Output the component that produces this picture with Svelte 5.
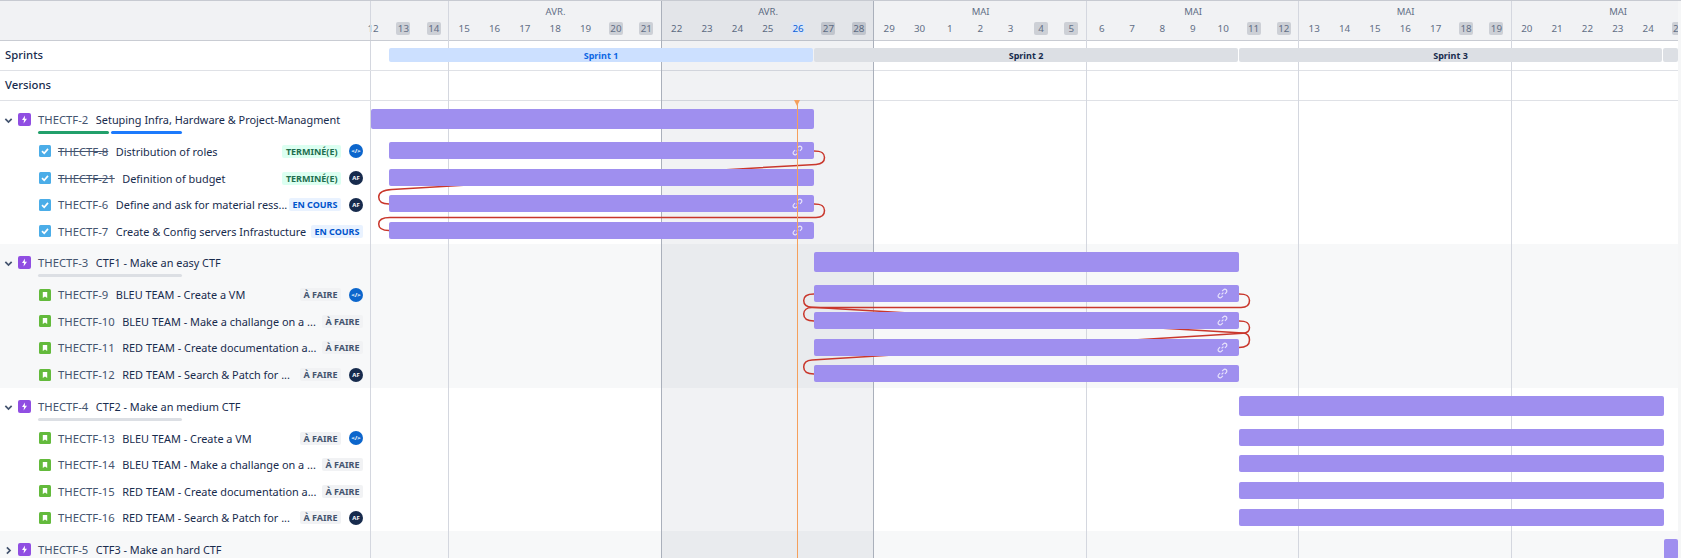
<script lang="ts">
  // timeline scale: one day column, first visible day is 12 avr. and starts left of the chart
  const dayW = 30.36;
  const originX = -13.1;
  const chartLeft = 371;

  const x = (px: number) => px - chartLeft;

  const april = [12, 13, 14, 15, 16, 17, 18, 19, 20, 21, 22, 23, 24, 25, 26, 27, 28, 29, 30];
  const may = Array.from({ length: 25 }, (_, i) => i + 1);
  const weekendSet = new Set(["a13", "a14", "a20", "a21", "a27", "a28", "m4", "m5", "m11", "m12", "m18", "m19", "m25"]);
  const days = [
    ...april.map((d) => ({ id: "a" + d, label: d })),
    ...may.map((d) => ({ id: "m" + d, label: d })),
  ];

  const weekW = dayW * 7;
  const firstLine = 448.3;
  const weekLines = [0, 1, 2, 3, 4, 5];
  const months = ["AVR.", "AVR.", "MAI", "MAI", "MAI", "MAI"];

  const sprints = [
    { label: "Sprint 1", from: 389, to: 813, active: true },
    { label: "Sprint 2", from: 814, to: 1238, active: false },
    { label: "Sprint 3", from: 1239, to: 1662, active: false },
    { label: "", from: 1663, to: 1678, active: false },
  ];

  type Child = { key: string; title: string; kind: string; status: string; who?: string; done?: boolean };
  type Group = { key: string; title: string; open: boolean; from: number; to: number; progress: boolean; childFrom: number; alt: boolean; children: Child[] };

  const groups: Group[] = [
    {
      key: "THECTF-2", title: "Setuping Infra, Hardware & Project-Managment", open: true,
      from: 371, to: 814, childFrom: 389, progress: true, alt: false,
      children: [
        { key: "THECTF-8", title: "Distribution of roles", kind: "task", status: "TERMINÉ(E)", who: "dev", done: true },
        { key: "THECTF-21", title: "Definition of budget", kind: "task", status: "TERMINÉ(E)", who: "af", done: true },
        { key: "THECTF-6", title: "Define and ask for material ress...", kind: "task", status: "EN COURS", who: "af" },
        { key: "THECTF-7", title: "Create & Config servers Infrastucture", kind: "task", status: "EN COURS" },
      ],
    },
    {
      key: "THECTF-3", title: "CTF1 - Make an easy CTF", open: true,
      from: 814, to: 1239, childFrom: 814, progress: false, alt: true,
      children: [
        { key: "THECTF-9", title: "BLEU TEAM - Create a VM", kind: "story", status: "À FAIRE", who: "dev" },
        { key: "THECTF-10", title: "BLEU TEAM - Make a challange on a ...", kind: "story", status: "À FAIRE" },
        { key: "THECTF-11", title: "RED TEAM - Create documentation a...", kind: "story", status: "À FAIRE" },
        { key: "THECTF-12", title: "RED TEAM - Search & Patch for ...", kind: "story", status: "À FAIRE", who: "af" },
      ],
    },
    {
      key: "THECTF-4", title: "CTF2 - Make an medium CTF", open: true,
      from: 1239, to: 1664, childFrom: 1239, progress: false, alt: false,
      children: [
        { key: "THECTF-13", title: "BLEU TEAM - Create a VM", kind: "story", status: "À FAIRE", who: "dev" },
        { key: "THECTF-14", title: "BLEU TEAM - Make a challange on a ...", kind: "story", status: "À FAIRE" },
        { key: "THECTF-15", title: "RED TEAM - Create documentation a...", kind: "story", status: "À FAIRE" },
        { key: "THECTF-16", title: "RED TEAM - Search & Patch for ...", kind: "story", status: "À FAIRE", who: "af" },
      ],
    },
    {
      key: "THECTF-5", title: "CTF3 - Make an hard CTF", open: false,
      from: 1664, to: 1678, childFrom: 1664, progress: false, alt: true,
      children: [],
    },
  ];

  // red dependency links, in page coordinates
  const links = [
    "M814 151 C822 151 824.5 153 824.5 157.5 C824.5 162 822 164 816 164.4 L392 189.6 C383 190.2 378.7 193 378.7 197 C378.7 201 382 204 389 204",
    "M814 204 C822 204 824.5 206 824.5 210.5 C824.5 215 822 217.5 816 217.5 L390 217.5 C383 217.5 378.7 220 378.7 224 C378.7 228 382 230.5 389 230.5",
    "M1239 294 C1247 294 1249.5 296 1249.5 300.5 C1249.5 305 1247 307.5 1241 307.5 L812 307.5 C807 307.5 803.7 310 803.7 314 C803.7 318 807 321 814 321",
    "M814 294 C807 294 803.7 296 803.7 300.5 C803.7 304.5 806 307 812 307.3 L1243 333 C1247 333.3 1249.5 336 1249.5 340 C1249.5 344.5 1247 347.5 1239 347.5",
    "M1239 321 C1247 321 1249.5 323 1249.5 327.5 C1249.5 331 1247 333 1243 333.3 L812 360 C807 360.4 803.7 363 803.7 367 C803.7 371 807 374 814 374",
  ];
</script>

<div class="page">
  <div class="row head">
    <div class="side"></div>
    <div class="chart">
      {#each months as m, i}
        <span class="month" style="left:{x(firstLine) + 1 + weekW * (i + 0.5)}px">{m}</span>
      {/each}
      {#each days as d, i}
        <span
          class="day"
          class:weekend={weekendSet.has(d.id)}
          class:today={d.id === "a26"}
          style="left:{originX + dayW * i}px"
        ><i>{d.label}</i></span>
      {/each}
    </div>
  </div>

  <div class="row lane">
    <div class="side lane-name">Sprints</div>
    <div class="chart">
      {#each sprints as s}
        <span class="sprint" class:active={s.active} style="left:{x(s.from)}px;width:{s.to - s.from}px">{s.label}</span>
      {/each}
    </div>
  </div>

  <div class="row lane">
    <div class="side lane-name">Versions</div>
    <div class="chart"></div>
  </div>

  {#each groups as g}
    <div class="group" class:alt={g.alt}>
      <div class="row epic">
        <div class="side">
          <svg class="chev" viewBox="0 0 10 10" class:closed={!g.open}>
            <path d="M1.5 3.2 L5 6.7 L8.5 3.2" fill="none" stroke="#44546f" stroke-width="1.9" />
          </svg>
          <svg class="type" viewBox="0 0 13 13">
            <rect width="13" height="13" rx="2" fill="#904ee2" />
            <path d="M7 2.6 L4 7.1 H6 L5.6 10.4 L9 5.7 H6.8 Z" fill="#fff" />
          </svg>
          <div class="epic-text">
            <div class="title"><span class="key">{g.key}</span><span class="sum">{g.title}</span></div>
            {#if g.open}
              <div class="progress">
                {#if g.progress}
                  <span class="green"></span><span class="blue"></span>
                {:else}
                  <span class="grey"></span>
                {/if}
              </div>
            {/if}
          </div>
        </div>
        <div class="chart">
          <div class="bar epic-bar" style="left:{x(g.from)}px;width:{g.to - g.from}px"></div>
        </div>
      </div>

      {#each g.children as c, n}
        <div class="row child">
          <div class="side">
            {#if c.kind === "task"}
              <svg class="type small" viewBox="0 0 12 12">
                <rect width="12" height="12" rx="1.5" fill="#4bade8" />
                <path d="M3 6.2 L5.2 8.3 L9 3.9" fill="none" stroke="#fff" stroke-width="1.7" />
              </svg>
            {:else}
              <svg class="type small" viewBox="0 0 12 12">
                <rect width="12" height="12" rx="1.5" fill="#63ba3c" />
                <path d="M3.8 3 H8.2 V9 L6 7.4 L3.8 9 Z" fill="#fff" />
              </svg>
            {/if}
            <span class="key" class:done={c.done}>{c.key}</span>
            <span class="sum">{c.title}</span>
            <span
              class="status"
              class:green-tag={c.status.startsWith("TERM")}
              class:blue-tag={c.status === "EN COURS"}
            >{c.status}</span>
            {#if c.who === "dev"}
              <span class="avatar dev">&lt;/&gt;</span>
            {:else if c.who === "af"}
              <span class="avatar af">AF</span>
            {/if}
          </div>
          <div class="chart">
            <div class="bar" style="left:{x(g.childFrom)}px;width:{g.to - g.childFrom}px">
              {#if g.childFrom !== 1239 && !(g.childFrom === 389 && n === 1)}
                <svg class="link" viewBox="0 0 12 12">
                  <path d="M5 7 L7 5 M5.6 3.4 L7 2 C8 1 9.2 1 10.1 1.9 C11 2.8 11 4 10 5 L8.6 6.4 M6.4 8.6 L5 10 C4 11 2.8 11 1.9 10.1 C1 9.2 1 8 2 7 L3.4 5.6" fill="none" stroke="#e9e5fb" stroke-width="1.2" />
                </svg>
              {/if}
            </div>
          </div>
        </div>
      {/each}
    </div>
  {/each}

  <!-- overlays on the chart area -->
  <div class="shade"></div>
  {#each weekLines as w}
    <span class="vline" class:strong={w === 1 || w === 2} style="left:{firstLine + weekW * w}px"></span>
  {/each}
  <svg class="deps" width="1681" height="558">
    {#each links as d}
      <path {d} fill="none" stroke="#c9372c" stroke-width="1.5" />
    {/each}
  </svg>
  <div class="now"></div>
  <div class="now-tip"></div>
  <div class="edge"></div>
</div>

<style>
  :global(body) {
    margin: 0;
    background: #fff;
  }

  .page {
    position: relative;
    width: 1681px;
    height: 558px;
    overflow: hidden;
    font-family: "Noto Sans", "Open Sans", sans-serif;
    font-size: 11.3px;
    color: #172b4d;
    border-top: 1px solid #c7cad1;
    box-sizing: border-box;
  }

  .row {
    display: flex;
    position: relative;
  }

  .side {
    width: 371px;
    flex-shrink: 0;
    box-sizing: border-box;
    display: flex;
    align-items: center;
    border-right: 1px solid #d4d7df;
    position: relative;
    z-index: 3;
  }

  .chart {
    flex: 1;
    position: relative;
    overflow: visible;
  }

  /* Header */
  .head {
    height: 40px;
    box-sizing: border-box;
    background: #f1f2f4;
    border-bottom: 1px solid #c9ccd3;
    overflow: hidden;
  }

  .month {
    position: absolute;
    top: 4px;
    width: 60px;
    margin-left: -30px;
    text-align: center;
    font-size: 9.5px;
    color: #626f86;
  }

  .day {
    position: absolute;
    top: 21px;
    width: 30.36px;
    display: flex;
    justify-content: center;
    font-size: 9.8px;
    line-height: 13px;
    color: #626f86;
  }

  .day i {
    font-style: normal;
    width: 14px;
    text-align: center;
    border-radius: 2px;
  }

  .day.weekend i {
    background: #cdd0d6;
  }

  .day.today i {
    background: #e9f2ff;
    color: #0c66e4;
  }

  /* Swimlanes */
  .lane {
    height: 30px;
    border-bottom: 1px solid #dfe1e6;
    box-sizing: border-box;
  }

  .lane-name {
    padding: 0 0 2px 5px;
    font-weight: 500;
    font-size: 11.3px;
  }

  .sprint {
    position: absolute;
    top: 6.5px;
    height: 14px;
    border-radius: 2px;
    background: #dcdfe4;
    text-align: center;
    font-size: 9px;
    font-weight: 700;
    line-height: 15px;
    color: #172b4d;
    z-index: 2;
  }

  .sprint.active {
    background: #cce0ff;
    color: #0c66e4;
  }

  /* Issue groups */
  .group {
    height: 143.3px;
    overflow: visible;
  }

  .group.alt {
    background: #f7f8f9;
  }

  .epic {
    height: 37.2px;
  }

  .epic .side {
    padding-left: 4px;
    align-items: flex-start;
  }

  .chev {
    width: 9px;
    height: 9px;
    margin-top: 15px;
    flex-shrink: 0;
  }

  .chev.closed {
    transform: rotate(-90deg);
  }

  .type {
    width: 13px;
    height: 13px;
    margin: 12px 7px 0 5px;
    flex-shrink: 0;
  }

  .epic-text {
    flex: 1;
    padding-top: 10px;
  }

  .title {
    display: flex;
    line-height: 17px;
    white-space: nowrap;
  }

  .key {
    color: #44546f;
    margin-right: 7.5px;
    white-space: nowrap;
  }

  .key.done {
    text-decoration: line-through;
  }

  .sum {
    font-size: 10.9px;
    white-space: nowrap;
    color: #172b4d;
  }

  .progress {
    display: flex;
    gap: 2px;
    margin-top: 3px;
    height: 3px;
  }

  .progress span {
    height: 3px;
    border-radius: 2px;
    display: block;
    width: 71px;
  }

  .progress .green { background: #22a06b; }
  .progress .blue { background: #1d7afc; }
  .progress .grey { background: #dcdfe4; width: 144px; }

  .child {
    height: 26.6px;
  }

  .child .side {
    padding-left: 39px;
    padding-right: 7px;
    justify-content: flex-start;
  }

  .type.small {
    width: 12px;
    height: 12px;
    margin: 0 7px 0 0;
  }

  .status {
    margin-left: auto;
    height: 13px;
    line-height: 13px;
    padding: 0 3.5px;
    border-radius: 2px;
    font-size: 9px;
    font-weight: 700;
    background: #f1f2f4;
    color: #44546f;
    white-space: nowrap;
  }

  .status.green-tag {
    background: #dcfff1;
    color: #216e4e;
  }

  .status.blue-tag {
    background: #e9f2ff;
    color: #0055cc;
  }

  .avatar {
    width: 14px;
    height: 14px;
    border-radius: 50%;
    margin-left: 8px;
    display: flex;
    align-items: center;
    justify-content: center;
    font-size: 6px;
    font-weight: 700;
    color: #fff;
    flex-shrink: 0;
  }

  .avatar.dev { background: #0c66cc; }
  .avatar.af { background: #172b4d; }

  /* Bars */
  .bar {
    position: absolute;
    top: 4px;
    height: 17px;
    border-radius: 2px;
    background: #9f8fef;
    z-index: 2;
  }

  .epic-bar {
    top: 8px;
    height: 20px;
  }

  .link {
    position: absolute;
    right: 11.5px;
    top: 3px;
    width: 11px;
    height: 11px;
  }

  /* Overlays */
  .shade {
    position: absolute;
    left: 661px;
    top: 0;
    width: 212.5px;
    bottom: 0;
    background: rgba(9, 30, 66, 0.06);
    z-index: 1;
  }

  .vline {
    position: absolute;
    top: 0;
    bottom: 0;
    width: 1px;
    background: #d4d7df;
    z-index: 1;
  }

  .vline.strong {
    background: #aab0bb;
  }

  .deps {
    position: absolute;
    left: 0;
    top: -1px;
    z-index: 1;
    pointer-events: none;
  }

  .now {
    position: absolute;
    left: 796.5px;
    top: 99px;
    bottom: 0;
    width: 1px;
    background: #f5a05c;
    z-index: 4;
  }

  .now-tip {
    position: absolute;
    left: 794px;
    top: 99px;
    border-left: 3px solid transparent;
    border-right: 3px solid transparent;
    border-top: 6px solid #f5a05c;
    z-index: 4;
  }

  .edge {
    position: absolute;
    right: 0;
    top: 0;
    bottom: 0;
    width: 3px;
    background: #f5f6f7;
    z-index: 5;
  }
</style>
